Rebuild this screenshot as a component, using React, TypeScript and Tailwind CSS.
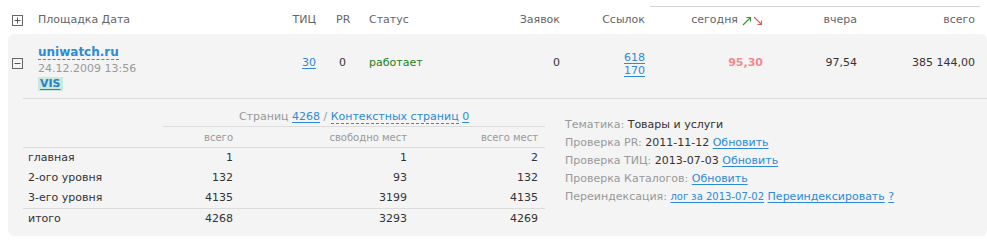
import React from 'react';

const font = { fontFamily: '"DejaVu Sans", Verdana, sans-serif' };

function BoxIcon({ plus }: { plus?: boolean }) {
  return (
    <svg width="11" height="11" viewBox="0 0 11 11" className="block">
      <rect x="0.5" y="0.5" width="10" height="10" fill="none" stroke="#666" />
      <line x1="2.5" y1="5.5" x2="8.5" y2="5.5" stroke="#555" />
      {plus && <line x1="5.5" y1="2.5" x2="5.5" y2="8.5" stroke="#555" />}
    </svg>
  );
}

function Arrows() {
  return (
    <span className="inline-flex items-center gap-[1px] ml-[4px]">
      <svg width="10" height="10" viewBox="0 0 10 10">
        <line x1="1" y1="9" x2="8.5" y2="1.5" stroke="#2a9a2a" strokeWidth="1.1" />
        <path d="M4.5 1.5 H8.5 V5.5" fill="none" stroke="#2a9a2a" strokeWidth="1.1" />
      </svg>
      <svg width="10" height="10" viewBox="0 0 10 10">
        <line x1="1" y1="1" x2="8.5" y2="8.5" stroke="#e05a5a" strokeWidth="1.1" />
        <path d="M8.5 4.5 V8.5 H4.5" fill="none" stroke="#e05a5a" strokeWidth="1.1" />
      </svg>
    </span>
  );
}

const link = 'text-[#2d8bd5] underline underline-offset-2';

export default function App() {
  const rows = [
    { name: 'главная', total: '1', free: '1', all: '2' },
    { name: '2-ого уровня', total: '132', free: '93', all: '132' },
    { name: '3-его уровня', total: '4135', free: '3199', all: '4135' },
  ];

  return (
    <div className="w-[987px] h-[240px] bg-white text-[11px] text-[#333] overflow-hidden" style={font}>
      {/* Header */}
      <div className="pt-[6px]">
        <div className="ml-[650px] w-[330px] border-t border-[#d4d4d4]" />
        <div className="grid grid-cols-[38px_252px_26px_53px_131px_60px_85px_118px_94px_118px] h-[27px] items-center text-[#666]">
          <div className="pl-[12px]"><BoxIcon plus /></div>
          <div>Площадка Дата</div>
          <div className="text-right">ТИЦ</div>
          <div className="pl-[20px]">PR</div>
          <div>Статус</div>
          <div className="text-right">Заявок</div>
          <div className="text-right">Ссылок</div>
          <div className="flex items-center justify-end">сегодня<Arrows /></div>
          <div className="text-right">вчера</div>
          <div className="text-right">всего</div>
        </div>
      </div>

      {/* Panel */}
      <div className="ml-[8px] bg-[#f4f4f4] rounded-[6px] pb-[7px]">
        <div className="grid grid-cols-[30px_252px_26px_53px_131px_60px_85px_118px_94px_118px] h-[64px] items-start pt-[11px]">
          <div className="pl-[4px] mt-[13px]"><BoxIcon /></div>
          <div>
            <div className="leading-[15px]">
              <span className="font-bold text-[12px] text-[#2d8bd5] border-b border-dashed border-[#2d8bd5]">uniwatch.ru</span>
            </div>
            <div className="leading-[12px] text-[#999] mt-[3px]">24.12.2009 13:56</div>
            <div className="mt-[1px]">
              <span className="inline-block bg-[#c9e8e0] px-[2px] leading-[14px] font-bold text-[#2d7fc2] underline underline-offset-2">VIS</span>
            </div>
          </div>
          <div className="text-right mt-[11px] leading-[14px]"><span className={link}>30</span></div>
          <div className="pl-[23px] mt-[11px] leading-[14px]">0</div>
          <div className="mt-[11px] leading-[14px] text-[#1a801a]">работает</div>
          <div className="text-right mt-[11px] leading-[14px]">0</div>
          <div className="text-right mt-[6px] leading-[13px]">
            <div><span className={link}>618</span></div>
            <div><span className={link}>170</span></div>
          </div>
          <div className="text-right mt-[11px] leading-[14px] font-bold text-[#f28b8b]">95,30</div>
          <div className="text-right mt-[11px] leading-[14px]">97,54</div>
          <div className="text-right mt-[11px] leading-[14px]">385 144,00</div>
        </div>
        <div className="ml-[15px] border-b border-[#dcdcdc]" />

        {/* Details */}
        <div className="flex">
          <div className="ml-[15px] w-[522px]">
            <div className="ml-[140px] h-[28px] border-b border-[#dcdcdc] flex items-end justify-center pb-[2px] leading-[14px] text-[#999]">
              <span>
                Страниц <span className={link}>4268</span> / <span className="text-[#2d8bd5] border-b border-dashed border-[#2d8bd5]">Контекстных страниц</span> <span className={link}>0</span>
              </span>
            </div>
            <div className="grid grid-cols-[140px_77px_174px_131px] h-[21px] items-center border-b border-[#dcdcdc] text-[10px] text-[#999]">
              <div />
              <div className="text-right pr-[7px]">всего</div>
              <div className="text-right pr-[7px]">свободно мест</div>
              <div className="text-right pr-[7px]">всего мест</div>
            </div>
            {rows.map((r, i) => (
              <div
                key={r.name}
                className={`grid grid-cols-[140px_77px_174px_131px] items-center ${i === rows.length - 1 ? 'h-[21px] border-b border-[#dcdcdc]' : 'h-[20px]'}`}
              >
                <div className="pl-[5px]">{r.name}</div>
                <div className="text-right pr-[7px]">{r.total}</div>
                <div className="text-right pr-[7px]">{r.free}</div>
                <div className="text-right pr-[7px]">{r.all}</div>
              </div>
            ))}
            <div className="grid grid-cols-[140px_77px_174px_131px] h-[20px] items-center">
              <div className="pl-[5px]">итого</div>
              <div className="text-right pr-[7px]">4268</div>
              <div className="text-right pr-[7px]">3293</div>
              <div className="text-right pr-[7px]">4269</div>
            </div>
          </div>

          <div className="ml-[20px] pt-[17px] leading-[18px] text-[#999]">
            <div>Тематика: <span className="text-[#333]">Товары и услуги</span></div>
            <div>Проверка PR: <span className="text-[#333]">2011-11-12</span> <span className={link}>Обновить</span></div>
            <div>Проверка ТИЦ: <span className="text-[#333]">2013-07-03</span> <span className={link}>Обновить</span></div>
            <div>Проверка Каталогов: <span className={link}>Обновить</span></div>
            <div>
              Переиндексация: <span className={`${link} text-[10px]`}>лог за 2013-07-02</span> <span className={link}>Переиндексировать</span> <span className={link}>?</span>
            </div>
          </div>
        </div>
      </div>
    </div>
  );
}
